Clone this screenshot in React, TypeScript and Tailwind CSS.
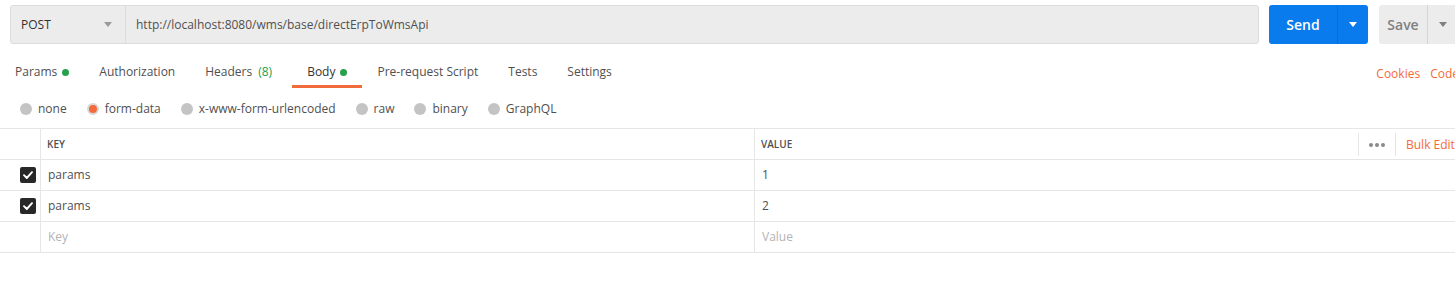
import React from 'react';

const ORANGE = 'text-[#f26b3a]';

function Caret({ className = '' }: { className?: string }) {
  return (
    <svg width="8" height="5" viewBox="0 0 8 5" className={className}>
      <path d="M0 0 L8 0 L4 5 Z" fill="currentColor" />
    </svg>
  );
}

function Dot() {
  return <span className="inline-block w-[7px] h-[7px] rounded-full bg-[#26a04a] ml-[5px]" />;
}

function Check() {
  return (
    <span className="w-4 h-4 rounded-[2px] bg-[#282828] flex items-center justify-center">
      <svg width="10" height="8" viewBox="0 0 10 8">
        <path d="M1 4.2 L3.8 7 L9 1.2" stroke="white" strokeWidth="1.9" fill="none" strokeLinecap="round" strokeLinejoin="round" />
      </svg>
    </span>
  );
}

const tabs = [
  { label: 'Params', dot: true },
  { label: 'Authorization' },
  { label: 'Headers', count: '(8)' },
  { label: 'Body', dot: true, active: true },
  { label: 'Pre-request Script' },
  { label: 'Tests' },
  { label: 'Settings' },
];

const bodyTypes = ['none', 'form-data', 'x-www-form-urlencoded', 'raw', 'binary', 'GraphQL'];

const rows = [
  { key: 'params', value: '1' },
  { key: 'params', value: '2' },
];

export default function App() {
  return (
    <div className="w-[1455px] h-[283px] overflow-hidden bg-white text-[#505050] text-[12px] font-['Open_Sans',sans-serif]">
      <div className="w-[1500px]">
        {/* request bar */}
        <div className="flex items-center pt-[5px] pl-[10px] h-[44px]">
          <div className="flex w-[1249px] h-[39px] bg-[#ececec] border border-[#dcdcdc] rounded-[3px]">
            <div className="w-[115px] flex items-center justify-between pl-[10px] pr-[13px] border-r border-[#dcdcdc] text-[#333] text-[12px]">
              <span>POST</span>
              <Caret className="text-[#9a9a9a]" />
            </div>
            <div className="flex items-center pl-[10px] text-[#505050]">http://localhost:8080/wms/base/directErpToWmsApi</div>
          </div>
          <div className="ml-[10px] flex h-[39px] w-[99px] bg-[#097bed] rounded-[3px] text-white">
            <div className="w-[69px] flex items-center justify-center font-semibold text-[14px] border-r border-[#0a6ed1]">Send</div>
            <div className="flex-1 flex items-center justify-center">
              <Caret className="text-white" />
            </div>
          </div>
          <div className="ml-[11px] flex h-[39px] w-[90px] bg-[#ececec] rounded-[3px] text-[#808080]">
            <div className="w-[49px] flex items-center justify-center font-semibold text-[14px] border-r border-[#d6d6d6]">Save</div>
            <div className="w-[30px] flex items-center justify-center">
              <Caret className="text-[#808080]" />
            </div>
          </div>
        </div>

        {/* tabs */}
        <div className="flex w-[1455px] items-start mt-[12px] h-[32px]">
          {tabs.map((t) => (
            <div
              key={t.label}
              className={`h-[32px] px-[15px] pt-[3px] flex items-center border-b-[3px] ${t.active ? 'border-[#f26b3a] text-[#333]' : 'border-transparent'}`}
            >
              <span>{t.label}</span>
              {t.count && <span className="ml-[6px] mr-[5px] text-[#26a04a]">{t.count}</span>}
              {t.dot && <Dot />}
            </div>
          ))}
          <div className="flex-1" />
          <div className={`h-[32px] pt-[3px] flex items-center gap-[10px] ${ORANGE} -mr-[4px]`}>
            <span>Cookies</span>
            <span>Code</span>
          </div>
        </div>

        {/* body types */}
        <div className="flex items-center h-[40px] pt-[1px] pl-[20px]">
          {bodyTypes.map((b, i) => (
            <div key={b} className="flex items-center mr-[20px]">
              {i === 1 ? (
                <span className="w-3 h-3 rounded-full bg-[#f26b3a] border-2 border-[#d8d8d8]" />
              ) : (
                <span className="w-3 h-3 rounded-full bg-[#c4c4c4]" />
              )}
              <span className="ml-[6px]">{b}</span>
            </div>
          ))}
        </div>

        {/* table */}
        <div className="border-t border-[#e6e6e6] w-[1500px]">
          <div className="flex h-[31px] border-b border-[#e6e6e6]">
            <div className="w-[41px] border-r border-[#e6e6e6]" />
            <div className="w-[714px] border-r border-[#e6e6e6] flex items-center pl-[6px] text-[10px] font-semibold text-[#505050]">KEY</div>
            <div className="w-[603px] flex items-center pl-[6px] text-[10px] font-semibold text-[#505050]">VALUE</div>
            <div className="flex items-center h-[31px] py-[4px]">
              <div className="h-full border-l border-[#e6e6e6] w-[1px]" />
              <div className="flex gap-[2px] px-[10px]">
                <span className="w-[4px] h-[4px] rounded-full bg-[#8a8a8a]" />
                <span className="w-[4px] h-[4px] rounded-full bg-[#8a8a8a]" />
                <span className="w-[4px] h-[4px] rounded-full bg-[#8a8a8a]" />
              </div>
              <div className="h-full border-l border-[#e6e6e6] w-[1px]" />
              <span className={`ml-[10px] ${ORANGE}`}>Bulk Edit</span>
            </div>
          </div>
          {rows.map((r, i) => (
            <div key={i} className="flex h-[31px] border-b border-[#e6e6e6]">
              <div className="w-[41px] border-r border-[#e6e6e6] flex items-center pl-[20px]">
                <Check />
              </div>
              <div className="w-[714px] border-r border-[#e6e6e6] flex items-center pl-[7px]">{r.key}</div>
              <div className="flex-1 flex items-center pl-[7px]">{r.value}</div>
            </div>
          ))}
          <div className="flex h-[31px] border-b border-[#e6e6e6] text-[#b3b3b3]">
            <div className="w-[41px] border-r border-[#e6e6e6]" />
            <div className="w-[714px] border-r border-[#e6e6e6] flex items-center pl-[7px]">Key</div>
            <div className="flex-1 flex items-center pl-[7px]">Value</div>
          </div>
        </div>
      </div>
    </div>
  );
}
